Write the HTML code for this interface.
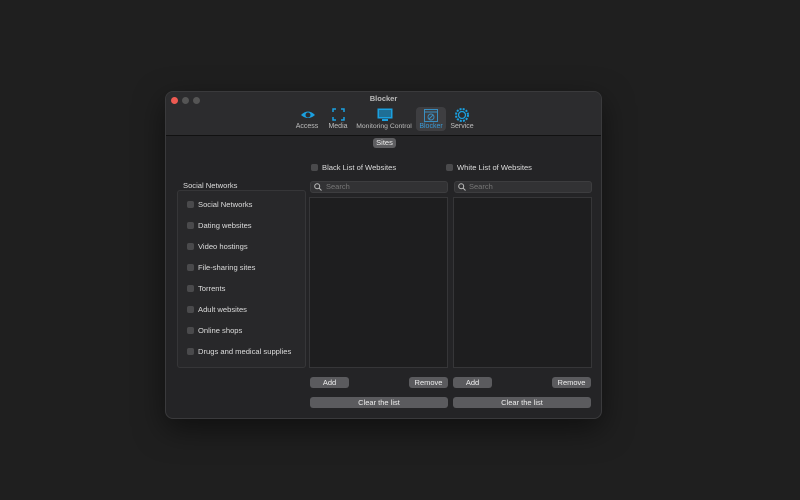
<!DOCTYPE html><html><head><style>
body{margin:0;width:800px;height:500px;background:#1f1f1f;font-family:"Liberation Sans",sans-serif;position:relative;overflow:hidden;color:#dcdcdc}
.a{position:absolute}
.win{left:165px;top:91px;width:437px;height:328px;background:#242426;border:1px solid #3a3a3c;border-radius:8px;box-sizing:border-box;overflow:hidden;box-shadow:0 10px 30px rgba(0,0,0,.5)}
.tb{left:0;top:0;width:100%;height:43px;background:#2c2c2e;border-bottom:1px solid #111}
.dot{width:7px;height:7px;border-radius:50%;top:5px}
.lbl{font-size:7px;color:#bdbdbd;text-align:center;width:60px;white-space:nowrap}
.cb{width:7px;height:7px;background:#4a4a4c;border-radius:2px}
.it{font-size:7.6px;color:#ddd;white-space:nowrap}
.btn{background:#5b5b5e;border-radius:3px;font-size:7.5px;color:#eee;text-align:center;height:11px;line-height:11px}
.srch{background:#323234;border:1px solid #3d3d3f;border-radius:3px;height:10px;font-size:7.5px;color:#777;line-height:10px}
.box{background:#1e1e1f;border:1px solid #363638}
</style></head><body>
<div class="a win">
<div class="a tb"></div>
<div class="a dot" style="left:5px;background:#ee5a52"></div>
<div class="a dot" style="left:16px;background:#555"></div>
<div class="a dot" style="left:27px;background:#555"></div>
<div class="a" style="left:0;top:2px;width:100%;text-align:center;font-size:7.5px;color:#bbb;font-weight:bold">Blocker</div>
<div class="a" style="left:250px;top:15px;width:30px;height:24px;background:#3e3e41;border-radius:4px"></div>
<svg class="a" style="left:134px;top:17px" width="16" height="12"><path d="M1 6Q8 -1 15 6Q8 12 1 6Z" fill="#1aa0e0"/><circle cx="8" cy="6" r="2.5" fill="#2c2c2e"/></svg>
<svg class="a" style="left:166px;top:16px" width="13" height="13" fill="none" stroke="#1aa0e0" stroke-width="1.5"><path d="M1 4V1H4M9 1H12V4M12 9V12H9M4 12H1V9"/></svg>
<svg class="a" style="left:211px;top:16px" width="16" height="14"><rect x="0.5" y="0.5" width="15" height="10" fill="#1aa0e0"/><rect x="2" y="2" width="12" height="7" fill="#1f6f96"/><rect x="5" y="11" width="6" height="2" fill="#1aa0e0"/></svg>
<svg class="a" style="left:258px;top:17px" width="14" height="13" fill="none" stroke="#3a8ec0"><rect x="0.5" y="0.5" width="13" height="12"/><line x1="0.5" y1="3" x2="13.5" y2="3"/><circle cx="7" cy="8" r="3"/><line x1="5" y1="10" x2="9" y2="6"/></svg>
<svg class="a" style="left:289px;top:16px" width="14" height="14"><circle cx="7" cy="7" r="6" fill="none" stroke="#1aa0e0" stroke-width="2" stroke-dasharray="2 1.2"/><circle cx="7" cy="7" r="3.5" fill="none" stroke="#1aa0e0" stroke-width="1.3"/></svg>
<div class="a lbl" style="left:111px;top:31px">Access</div>
<div class="a lbl" style="left:142px;top:31px">Media</div>
<div class="a lbl" style="left:188px;top:31px;font-size:6.8px">Monitoring Control</div>
<div class="a lbl" style="left:235px;top:31px;color:#3a9ad6">Blocker</div>
<div class="a lbl" style="left:266px;top:31px">Service</div>
<div class="a" style="left:207px;top:46px;width:23px;height:10px;background:#5e5e61;border-radius:3px;font-size:7.5px;text-align:center;line-height:10px;color:#eee">Sites</div>
<div class="a it" style="left:17px;top:89px">Social Networks</div>
<div class="a box" style="left:11px;top:98px;width:127px;height:176px;background:#28282a;border-radius:3px"></div>
<div class="a cb" style="left:145px;top:72px"></div><div class="a it" style="left:156px;top:71px">Black List of Websites</div>
<div class="a cb" style="left:280px;top:72px"></div><div class="a it" style="left:291px;top:71px">White List of Websites</div>
<div class="a srch" style="left:144px;top:89px;width:136px"><span style="margin-left:15px">Search</span></div>
<div class="a srch" style="left:288px;top:89px;width:136px"><span style="margin-left:14px">Search</span></div>
<svg class="a" style="left:148px;top:91px" width="8" height="8" fill="none" stroke="#bbb"><circle cx="3.2" cy="3.2" r="2.5"/><line x1="5" y1="5" x2="7.5" y2="7.5"/></svg>
<svg class="a" style="left:292px;top:91px" width="8" height="8" fill="none" stroke="#bbb"><circle cx="3.2" cy="3.2" r="2.5"/><line x1="5" y1="5" x2="7.5" y2="7.5"/></svg>
<div class="a box" style="left:143px;top:105px;width:137px;height:169px"></div>
<div class="a box" style="left:287px;top:105px;width:137px;height:169px"></div>
<div class="a btn" style="left:144px;top:285px;width:39px">Add</div>
<div class="a btn" style="left:243px;top:285px;width:39px">Remove</div>
<div class="a btn" style="left:287px;top:285px;width:39px">Add</div>
<div class="a btn" style="left:386px;top:285px;width:39px">Remove</div>
<div class="a btn" style="left:144px;top:305px;width:138px">Clear the list</div>
<div class="a btn" style="left:287px;top:305px;width:138px">Clear the list</div>
</div>
<div class="a" style="left:187px;top:200px">
<div class="a cb" style="top:1px"></div><div class="a it" style="left:11px;top:0">Social Networks</div>
<div class="a cb" style="top:22px"></div><div class="a it" style="left:11px;top:21px">Dating websites</div>
<div class="a cb" style="top:43px"></div><div class="a it" style="left:11px;top:42px">Video hostings</div>
<div class="a cb" style="top:64px"></div><div class="a it" style="left:11px;top:63px">File-sharing sites</div>
<div class="a cb" style="top:85px"></div><div class="a it" style="left:11px;top:84px">Torrents</div>
<div class="a cb" style="top:106px"></div><div class="a it" style="left:11px;top:105px">Adult websites</div>
<div class="a cb" style="top:127px"></div><div class="a it" style="left:11px;top:126px">Online shops</div>
<div class="a cb" style="top:148px"></div><div class="a it" style="left:11px;top:147px">Drugs and medical supplies</div>
</div>
</body></html>
